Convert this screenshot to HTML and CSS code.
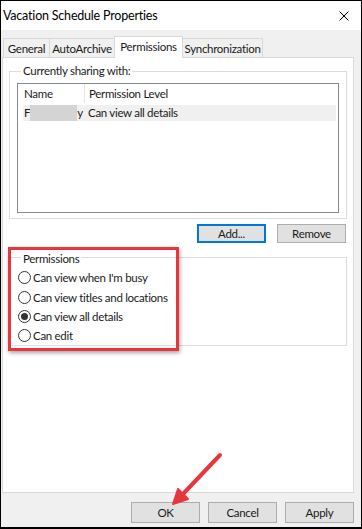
FILE: index.html
```html
<!DOCTYPE html>
<html lang="en">
<head>
    <meta charset="UTF-8">
    <meta name="viewport" content="width=device-width, initial-scale=1.0">
    <title>Vacation Schedule Properties</title>
    <link rel="stylesheet" href="styles.css">
</head>
<body>
    <div class="window">
        <div class="titlebar">
            <span class="title">Vacation Schedule Properties</span>
            <svg class="close" width="10" height="10" viewBox="0 0 10 10">
                <path d="M0.5 0.5L9.5 9.5M9.5 0.5L0.5 9.5" stroke="#000" stroke-width="1"/>
            </svg>
        </div>

        <div class="dialog">
            <div class="tabs">
                <div class="tab tab-general">General</div>
                <div class="tab tab-archive">AutoArchive</div>
                <div class="tab tab-perm active">Permissions</div>
                <div class="tab tab-sync">Synchronization</div>
            </div>

            <div class="page">
                <fieldset class="group group-sharing">
                    <legend>Currently sharing with:</legend>
                    <div class="listview">
                        <div class="lv-head">
                            <div class="col-name">Name</div>
                            <div class="col-level">Permission Level</div>
                        </div>
                        <div class="lv-row">
                            <div class="col-name">F<span class="redact"></span>y</div>
                            <div class="col-level">Can view all details</div>
                        </div>
                    </div>
                </fieldset>

                <div class="btn-row">
                    <button class="btn default">Add...</button>
                    <button class="btn">Remove</button>
                </div>

                <fieldset class="group group-perm">
                    <legend>Permissions</legend>
                    <label class="radio"><span class="dot"></span>Can view when I'm busy</label>
                    <label class="radio"><span class="dot"></span>Can view titles and locations</label>
                    <label class="radio"><span class="dot checked"></span>Can view all details</label>
                    <label class="radio"><span class="dot"></span>Can edit</label>
                </fieldset>
            </div>

            <div class="footer">
                <button class="btn btn-wide">OK</button>
                <button class="btn btn-wide">Cancel</button>
                <button class="btn btn-wide">Apply</button>
            </div>
        </div>

        <!-- annotations -->
        <div class="highlight"></div>
        <svg class="arrow" width="362" height="529" viewBox="0 0 362 529">
            <line x1="220" y1="455" x2="183" y2="494" stroke="#e8363d" stroke-width="4" stroke-linecap="round"/>
            <polygon points="173,504 188,499 178,489" fill="#e8363d" stroke="#e8363d" stroke-width="2" stroke-linejoin="round"/>
        </svg>
    </div>
</body>
</html>
```

FILE: styles.css
```css
body {
    margin: 0;
    font-family: Lato, "Liberation Sans", sans-serif;
    font-size: 11.5px;
    letter-spacing: -0.3px;
    color: #1a1a1a;
}
.window {
    position: relative;
    width: 362px;
    height: 529px;
    box-sizing: border-box;
    border: 1px solid #000;
    border-bottom-width: 2px;
    background: #f0f0f0;
    overflow: hidden;
}
.titlebar {
    height: 29px;
    background: #fff;
    display: flex;
    align-items: center;
    justify-content: space-between;
    padding: 0 12px 0 2px;
}
.title {
    font-size: 12.5px;
    letter-spacing: -0.2px;
    color: #000;
}
.dialog {
    padding: 8px 7px 0 1px;
}

/* tabs */
.tabs {
    display: flex;
    align-items: flex-end;
    height: 19px;
    position: relative;
    z-index: 1;
}
.tab {
    box-sizing: border-box;
    height: 19px;
    border: 1px solid #d9d9d9;
    border-bottom: none;
    background: #f0f0f0;
    margin-left: -1px;
    text-align: center;
    line-height: 19px;
}
.tab-general { width: 47px; margin-left: 1px; }
.tab-archive { width: 66px; }
.tab-perm { width: 69px; }
.tab-sync { width: 81px; }
.tab.active {
    height: 22px;
    margin-bottom: -1px;
    background: #fff;
    line-height: 19px;
}
.page {
    box-sizing: border-box;
    height: 436px;
    background: #fff;
    border: 1px solid #d9d9d9;
    padding: 0 6px;
}

/* group boxes */
.group {
    border: 1px solid #dcdcdc;
    margin: 5px 0 0;
    padding: 0 7px 5px;
}
.group legend {
    padding: 0 2px;
    margin-left: 4px;
    line-height: 16px;
}
.listview {
    box-sizing: border-box;
    height: 130px;
    margin-top: 4px;
    border: 1px solid #828790;
}
.lv-head, .lv-row {
    display: flex;
    height: 19px;
    line-height: 19px;
}
.lv-head .col-name {
    border-right: 1px solid #e5e5e5;
}
.lv-row {
    height: 16px;
    line-height: 16px;
    margin: 2px 2px 0 5px;
    background: #f0f0f0;
}
.col-name {
    width: 60px;
    padding-left: 6px;
    white-space: nowrap;
}
.lv-row .col-name {
    width: 60px;
    padding-left: 1px;
}
.col-level {
    padding-left: 4px;
}
.redact {
    display: inline-block;
    width: 47px;
    height: 16px;
    vertical-align: top;
    background: #d4d4d4;
}

/* buttons */
.btn-row {
    display: flex;
    justify-content: flex-end;
    gap: 11px;
    margin: 5px 1px 0 0;
}
.btn {
    box-sizing: border-box;
    width: 69px;
    height: 19px;
    padding: 0;
    font-family: inherit;
    font-size: 11.5px;
    letter-spacing: -0.3px;
    color: #1a1a1a;
    background: #e1e1e1;
    border: 1px solid #adadad;
}
.btn.default {
    border: 2px solid #0078d7;
}

.group-perm {
    margin-top: 5px;
    height: 98px;
    box-sizing: border-box;
    padding: 0 8px;
}
.group-perm legend {
    padding-top: 3px;
    margin-left: 3px;
}
.radio {
    display: flex;
    align-items: center;
    gap: 2px;
    height: 19.4px;
}
.radio:first-of-type {
    margin-top: 1px;
}
.dot {
    box-sizing: border-box;
    width: 13px;
    height: 13px;
    border: 1px solid #333;
    border-radius: 50%;
    background: #fff;
    position: relative;
}
.dot.checked::after {
    content: "";
    position: absolute;
    left: 2px;
    top: 2px;
    width: 7px;
    height: 7px;
    border-radius: 50%;
    background: #333;
}

.footer {
    display: flex;
    justify-content: flex-end;
    gap: 8px;
    margin-top: 9px;
}
.footer .btn {
    height: 21px;
}

/* annotations over the dialog */
.highlight {
    position: absolute;
    left: 7px;
    top: 246px;
    width: 171px;
    height: 104px;
    box-sizing: border-box;
    border: 3px solid #e8363d;
    box-shadow: 1px 2px 4px rgba(0, 0, 0, 0.35);
}
.arrow {
    position: absolute;
    left: -1px;
    top: -1px;
}
```
